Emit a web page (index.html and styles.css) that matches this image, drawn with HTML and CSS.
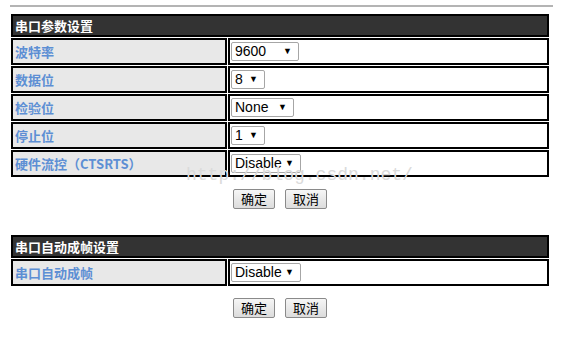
FILE: index.html
```html
<!DOCTYPE html>
<html>
    <head>
        <meta charset="utf-8">
        <meta name="viewport" content="width=device-width, initial-scale=1">
        <link rel="stylesheet" href="styles.css">
        <title>串口设置</title>
    </head>
    <body>
        <div class="page">
            <div class="rule"></div>

            <table class="settings">
                <thead>
                    <tr><th colspan="2">串口参数设置</th></tr>
                </thead>
                <tbody>
                    <tr>
                        <td class="label">波特率</td>
                        <td class="value">
                            <span class="dropdown w-baud"><select><option>9600</option><option>19200</option><option>115200</option></select></span>
                        </td>
                    </tr>
                    <tr>
                        <td class="label">数据位</td>
                        <td class="value">
                            <span class="dropdown w-short"><select><option>8</option><option>7</option></select></span>
                        </td>
                    </tr>
                    <tr>
                        <td class="label">检验位</td>
                        <td class="value">
                            <span class="dropdown w-none"><select><option>None</option><option>Odd</option><option>Even</option></select></span>
                        </td>
                    </tr>
                    <tr>
                        <td class="label">停止位</td>
                        <td class="value">
                            <span class="dropdown w-short"><select><option>1</option><option>2</option></select></span>
                        </td>
                    </tr>
                    <tr>
                        <td class="label">硬件流控（CTSRTS）</td>
                        <td class="value">
                            <span class="dropdown w-disable"><select><option>Disable</option><option>Enable</option></select></span>
                        </td>
                    </tr>
                </tbody>
            </table>
            <div class="actions">
                <button type="button">确定</button>
                <button type="button">取消</button>
            </div>

            <table class="settings second">
                <thead>
                    <tr><th colspan="2">串口自动成帧设置</th></tr>
                </thead>
                <tbody>
                    <tr>
                        <td class="label">串口自动成帧</td>
                        <td class="value">
                            <span class="dropdown w-disable"><select><option>Disable</option><option>Enable</option></select></span>
                        </td>
                    </tr>
                </tbody>
            </table>
            <div class="actions">
                <button type="button">确定</button>
                <button type="button">取消</button>
            </div>

            <div class="watermark">http://blog.csdn.net/</div>
        </div>
    </body>
</html>
```

FILE: styles.css
```css
body {
    margin: 0;
    padding: 0;
    background-color: #fff;
    color: #000;
    font: 13px "Liberation Sans", Arial, "Noto Sans CJK SC", sans-serif;
}

.page {
    position: relative;
    width: 543px;
    padding: 5px 0 0 10px;
}

.rule {
    height: 2px;
    background-color: #b4b4b4;
    margin-bottom: 6px;
}

table.settings {
    width: 540px;
    margin-left: 0;
    border-collapse: separate;
    border-spacing: 1px;
}

table.settings.second {
    margin-top: 25px;
}

table.settings th {
    height: 18px;
    padding: 0 2px;
    text-align: left;
    background-color: #333;
    color: #fff;
    font: bold 13px "Noto Sans CJK SC", sans-serif;
    border: 2px solid #000;
}

table.settings td {
    height: 23px;
    padding: 0 1px;
    border: 2px solid #000;
}

table.settings td.label {
    width: 208px;
    padding: 0 2px;
    background-color: #e8e8e8;
    color: #5d8fd4;
    font: bold 13px "Noto Sans CJK SC", sans-serif;
}

table.settings td.value {
    background-color: #fff;
}

.dropdown {
    position: relative;
    display: inline-block;
    vertical-align: middle;
}

.dropdown select {
    appearance: none;
    -webkit-appearance: none;
    width: 100%;
    height: 19px;
    margin: 0;
    padding: 0 0 0 3px;
    border: 1px solid #a6a6a6;
    border-radius: 2px;
    background-color: #fff;
    color: #000;
    font: 14px "Liberation Sans", Arial, sans-serif;
    line-height: 17px;
}

.dropdown::after {
    content: "\25BC";
    position: absolute;
    right: 7px;
    top: 4px;
    font-size: 9px;
    line-height: 10px;
    color: #000;
    pointer-events: none;
}

.w-baud { width: 68px; }
.w-short { width: 34px; }
.w-none { width: 63px; }
.w-disable { width: 70px; }

.actions {
    display: flex;
    justify-content: center;
    gap: 10px;
    padding: 11px 0 0 0;
    width: 540px;
}

.actions button {
    width: 42px;
    height: 20px;
    padding: 0;
    border: 1px solid #8a8a8a;
    border-radius: 2px;
    background: linear-gradient(#f6f6f6, #dcdcdc);
    color: #000;
    font: 13px "Noto Sans CJK SC", sans-serif;
    line-height: 18px;
}

.watermark {
    position: absolute;
    left: 186px;
    top: 165px;
    font: 18px "Liberation Mono", "Courier New", monospace;
    color: #dadada;
    pointer-events: none;
}
```
